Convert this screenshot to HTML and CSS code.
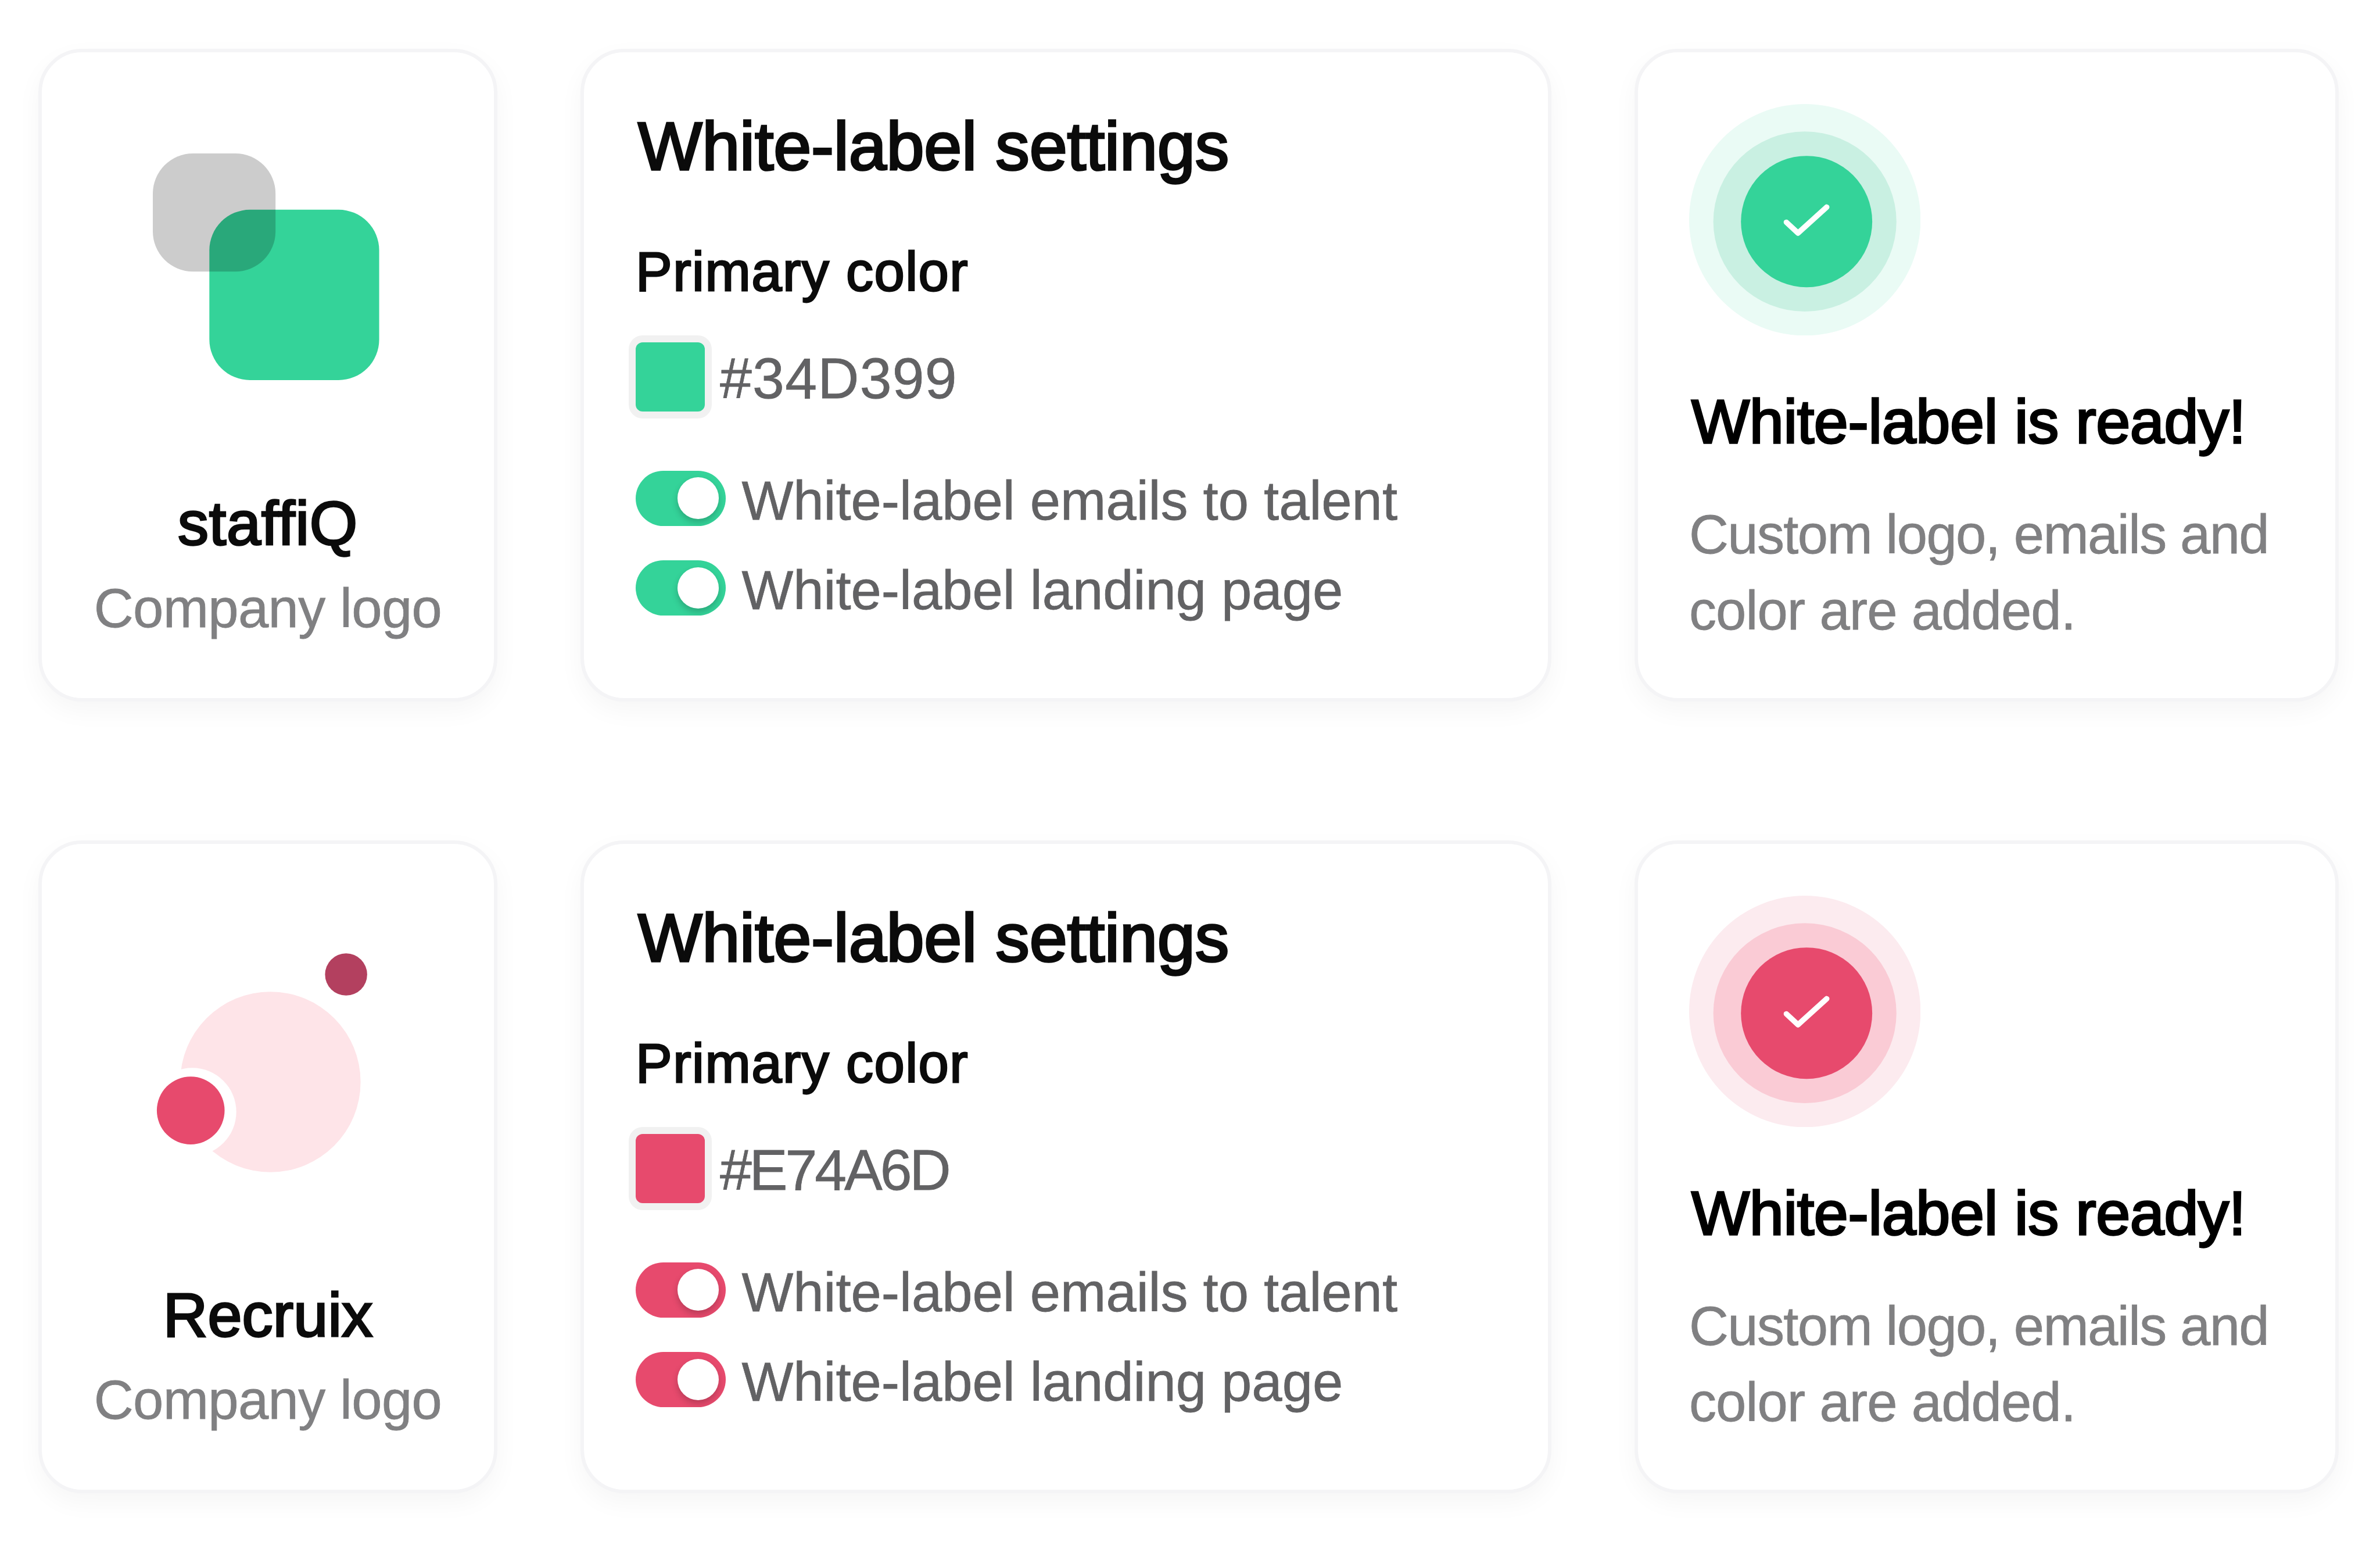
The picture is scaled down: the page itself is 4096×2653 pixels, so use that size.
FILE: index.html
```html
<!DOCTYPE html>
<html lang="en">
<head>
    <meta charset="UTF-8">
    <meta name="viewport" content="width=device-width, initial-scale=1.0">
    <title>White-label settings</title>
    <link rel="stylesheet" href="styles.css">
</head>
<body>
    <div class="row green">
        <div class="card brand">
            <svg class="logo" viewBox="353.6 354 525 525">
                <rect class="fill" x="484.6" y="484.3" width="393.4" height="394.6" rx="94"/>
                <rect x="353.6" y="354" width="284.3" height="273.6" rx="93" fill="#000" fill-opacity="0.2"/>
            </svg>
            <h2>staffiQ</h2>
            <p>Company logo</p>
        </div>
        <div class="card settings">
            <h1>White-label settings</h1>
            <h3>Primary color</h3>
            <div class="color">
                <span class="swatch"></span>
                <span class="hex">#34D399</span>
            </div>
            <div class="option">
                <span class="toggle"><span class="knob"></span></span>
                <span class="label">White-label emails to talent</span>
            </div>
            <div class="option">
                <span class="toggle"><span class="knob"></span></span>
                <span class="label">White-label landing page</span>
            </div>
        </div>
        <div class="card ready">
            <svg class="check" viewBox="3912 240 536 536">
                <circle class="outer" cx="4180" cy="508" r="268"/>
                <ellipse class="middle" cx="4180" cy="512" rx="212" ry="208.3"/>
                <circle class="fill" cx="4184" cy="512" r="152"/>
                <path d="M4137.1 513.5L4164.1 538.7L4230.7 478.5" fill="none" stroke="#fff" stroke-width="12.5" stroke-linecap="round" stroke-linejoin="round"/>
            </svg>
            <h2>White-label is ready!</h2>
            <p>Custom logo, emails and<br><span class="last">color are added.</span></p>
        </div>
    </div>

    <div class="row pink">
        <div class="card brand">
            <svg class="logo" viewBox="353.6 2186.3 525 525">
                <circle cx="626" cy="2503.3" r="209" fill="#fee4e8"/>
                <circle cx="445" cy="2572.6" r="102" fill="#fff"/>
                <circle class="fill" cx="441.4" cy="2569.4" r="78.5"/>
                <circle cx="801.4" cy="2254.4" r="48.8" fill="#b3405f"/>
            </svg>
            <h2>Recruix</h2>
            <p>Company logo</p>
        </div>
        <div class="card settings">
            <h1>White-label settings</h1>
            <h3>Primary color</h3>
            <div class="color">
                <span class="swatch"></span>
                <span class="hex">#E74A6D</span>
            </div>
            <div class="option">
                <span class="toggle"><span class="knob"></span></span>
                <span class="label">White-label emails to talent</span>
            </div>
            <div class="option">
                <span class="toggle"><span class="knob"></span></span>
                <span class="label">White-label landing page</span>
            </div>
        </div>
        <div class="card ready">
            <svg class="check" viewBox="3912 240 536 536">
                <circle class="outer" cx="4180" cy="508" r="268"/>
                <ellipse class="middle" cx="4180" cy="512" rx="212" ry="208.3"/>
                <circle class="fill" cx="4184" cy="512" r="152"/>
                <path d="M4137.1 513.5L4164.1 538.7L4230.7 478.5" fill="none" stroke="#fff" stroke-width="12.5" stroke-linecap="round" stroke-linejoin="round"/>
            </svg>
            <h2>White-label is ready!</h2>
            <p>Custom logo, emails and<br><span class="last">color are added.</span></p>
        </div>
    </div>
</body>
</html>
```

FILE: styles.css
```css
* {
    box-sizing: border-box;
}
body {
    margin: 0;
    min-height: 2653px;
    padding: 84px 71px 0 66px;
    background: #fff;
    font-family: "Liberation Sans", Arial, sans-serif;
    color: #0b0b0b;
}
.green {
    --primary: #34d399;
    --middle: #c9f0e2;
    --outer: #eafbf5;
}
.pink {
    --primary: #e74a6d;
    --middle: #facbd5;
    --outer: #fcebef;
}
.row {
    display: grid;
    grid-template-columns: 790px 1671px 1212px;
    gap: 143px;
    margin-bottom: 239px;
}
.row:last-child {
    margin-bottom: 0;
}
.card {
    height: 1123px;
    background: #fff;
    border: 6px solid #f4f4f6;
    border-radius: 75px;
    box-shadow: 0 16px 44px rgba(0, 0, 0, 0.04);
}
h1, h2, h3, p {
    margin: 0;
    font-weight: normal;
    white-space: nowrap;
}
/* the stroke gives a medium weight */
h1 {
    font-size: 117px;
    line-height: 140px;
    letter-spacing: -0.2px;
    -webkit-text-stroke: 3.6px currentColor;
}
h2 {
    font-size: 106px;
    line-height: 126px;
    -webkit-text-stroke: 3.3px currentColor;
}
h3 {
    font-size: 94px;
    line-height: 112px;
    letter-spacing: 1.5px;
    -webkit-text-stroke: 2.8px currentColor;
}
p {
    font-size: 94px;
    color: #808082;
    -webkit-text-stroke: 0.8px currentColor;
}
.fill {
    fill: var(--primary);
}
.outer {
    fill: var(--outer);
}
.middle {
    fill: var(--middle);
}

/* company logo */
.brand {
    display: flex;
    flex-direction: column;
    align-items: center;
    padding-top: 174px;
}
.logo {
    width: 390px;
    height: 390px;
    margin-right: 7px;
    overflow: visible;
}
.brand h2 {
    margin-top: 183px;
    letter-spacing: 0.8px;
    font-variant-ligatures: none;
}
.pink .brand h2 {
    letter-spacing: 0.2px;
}
.brand p {
    margin-top: 28px;
    line-height: 112px;
    letter-spacing: -0.65px;
}

/* settings */
.settings {
    padding: 92px 0 0 89px;
}
.settings h1 {
    margin-left: 4px;
}
.settings h3 {
    margin-top: 90px;
}
.color {
    display: flex;
    align-items: center;
    gap: 26px;
    height: 119px;
    margin: 65px 0 101.5px;
}
.swatch {
    width: 119px;
    height: 119px;
    border-radius: 12px;
    background: var(--primary);
    box-shadow: 0 0 0 12px #f1f1f1;
}
.hex {
    padding-top: 6px;
    font-size: 98.5px;
    letter-spacing: 1.3px;
    color: #626264;
    -webkit-text-stroke: 0.8px currentColor;
}
.pink .hex {
    letter-spacing: -4px;
}
.option {
    display: flex;
    align-items: center;
    gap: 28px;
    height: 95px;
    margin-bottom: 59.6px;
}
.toggle {
    display: flex;
    align-items: center;
    justify-content: flex-end;
    width: 154.5px;
    height: 95px;
    padding: 0 11.5px;
    border-radius: 48px;
    background: var(--primary);
    overflow: hidden;
}
.knob {
    width: 71.5px;
    height: 71.5px;
    border-radius: 50%;
    background: #fff;
    box-shadow: 0 6px 12px rgba(0, 0, 0, 0.2);
}
.label {
    padding-top: 9px;
    font-size: 94px;
    color: #626264;
    white-space: nowrap;
    -webkit-text-stroke: 0.8px currentColor;
}

/* success */
.ready {
    padding: 89px 0 0 88px;
}
.check {
    display: block;
    width: 398.4px;
    height: 398.4px;
}
.ready h2 {
    margin: 85px 0 0 4px;
    letter-spacing: -0.3px;
    color: #000;
}
.ready p {
    margin-top: 66px;
    line-height: 131px;
    letter-spacing: -1.63px;
}
.last {
    letter-spacing: -0.9px;
}
```
